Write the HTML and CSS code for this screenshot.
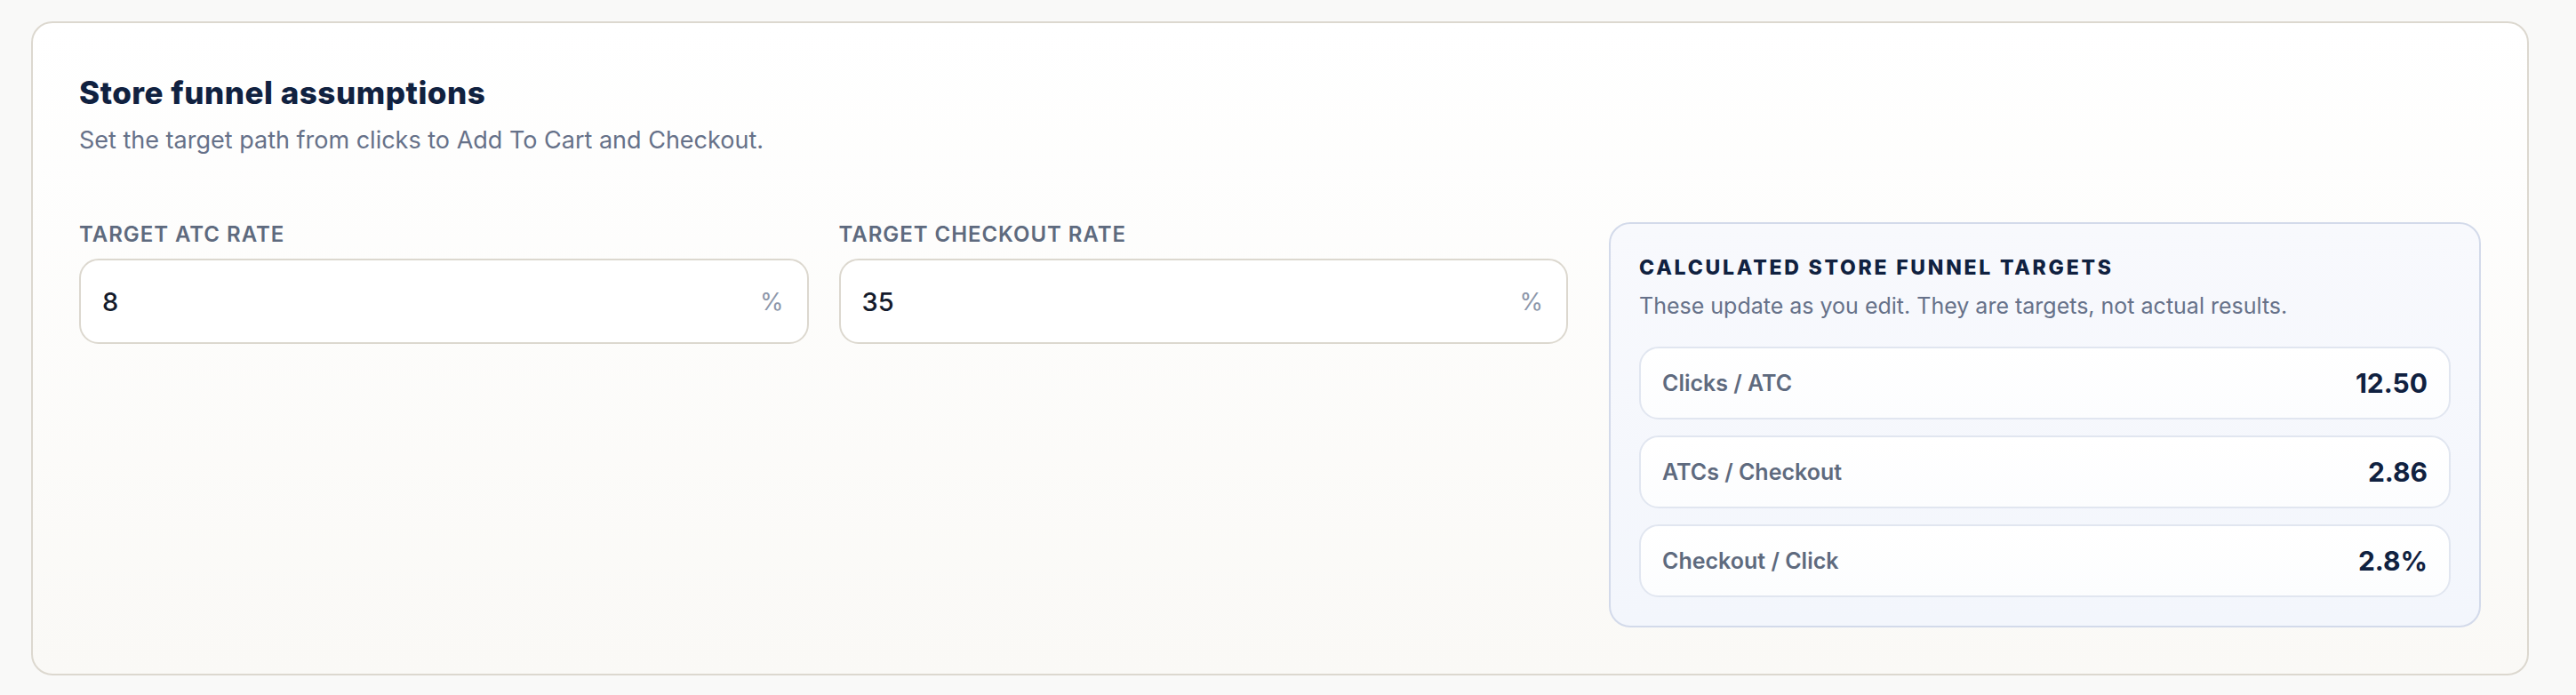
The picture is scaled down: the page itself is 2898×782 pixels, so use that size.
FILE: index.html
```html
<!DOCTYPE html>
<html lang="en">
<head>
<meta charset="utf-8">
<title>Store funnel assumptions</title>
<link rel="stylesheet" href="styles.css">
</head>
<body>
  <section class="card">
    <header class="card-head">
      <h2 class="card-title">Store funnel assumptions</h2>
      <p class="card-sub">Set the target path from clicks to Add To Cart and Checkout.</p>
    </header>

    <div class="layout">
      <div class="fields">
        <label class="field">
          <span class="field-label">Target ATC rate</span>
          <span class="field-box">
            <input class="field-input" type="text" value="8">
            <span class="field-unit">%</span>
          </span>
        </label>
        <label class="field">
          <span class="field-label">Target checkout rate</span>
          <span class="field-box">
            <input class="field-input" type="text" value="35">
            <span class="field-unit">%</span>
          </span>
        </label>
      </div>

      <aside class="targets">
        <h3 class="targets-title">Calculated store funnel targets</h3>
        <p class="targets-sub">These update as you edit. They are targets, not actual results.</p>
        <ul class="target-list">
          <li class="target-row"><span class="target-name">Clicks / ATC</span><span class="target-value">12.50</span></li>
          <li class="target-row"><span class="target-name">ATCs / Checkout</span><span class="target-value">2.86</span></li>
          <li class="target-row"><span class="target-name">Checkout / Click</span><span class="target-value">2.8%</span></li>
        </ul>
      </aside>
    </div>
  </section>
</body>
</html>
```

FILE: styles.css
```css
* {
  box-sizing: border-box;
}

html,
body {
  margin: 0;
}

body {
  background: #f9f9f8;
  font-family: Inter, "Noto Sans", "Liberation Sans", sans-serif;
  padding: 24px 53px 21px 35px;
  color: #0f1f3a;
}

.card {
  border: 2px solid #dcd8cf;
  border-radius: 24px;
  background: linear-gradient(180deg, #ffffff 0%, #faf9f6 100%);
  padding: 56px 52px 52px 52px;
}

.card-head {
  margin-bottom: 73px;
}

.card-title {
  margin: 0;
  font-size: 35px;
  line-height: 44px;
  font-weight: 800;
  letter-spacing: 0.015em;
  color: #102140;
}

.card-sub {
  margin: 13px 0 0;
  font-size: 27px;
  line-height: 38px;
  color: #667189;
}

.layout {
  display: grid;
  grid-template-columns: 1fr 981px;
  column-gap: 46px;
  align-items: start;
}

.fields {
  display: grid;
  grid-template-columns: 1fr 1fr;
  column-gap: 34px;
}

.field {
  display: flex;
  flex-direction: column;
  gap: 13px;
}

.field-label {
  font-size: 24px;
  line-height: 28px;
  font-weight: 600;
  letter-spacing: 0.04em;
  text-transform: uppercase;
  color: #5e6a7e;
}

.field-box {
  display: flex;
  align-items: center;
  height: 96px;
  border: 2px solid #dcd8cf;
  border-radius: 22px;
  background: #ffffff;
  padding: 0 26px 0 24px;
}

.field-input {
  flex: 1;
  min-width: 0;
  border: 0;
  outline: none;
  background: transparent;
  padding: 0;
  font-family: inherit;
  font-size: 29px;
  font-weight: 500;
  color: #131a2b;
}

.field-unit {
  font-size: 27px;
  color: #8d97aa;
}

.targets {
  border: 2px solid #d3daea;
  border-radius: 24px;
  background: linear-gradient(180deg, #f8f9fd 0%, #f3f6fc 100%);
  padding: 34px 32px 32px 32px;
}

.targets-title {
  margin: 0;
  font-size: 23px;
  line-height: 30px;
  font-weight: 800;
  letter-spacing: 0.12em;
  text-transform: uppercase;
  color: #102140;
}

.targets-sub {
  margin: 11px 0 0;
  font-size: 25px;
  line-height: 34px;
  color: #667189;
}

.target-list {
  list-style: none;
  margin: 29px 0 0;
  padding: 0;
  display: flex;
  flex-direction: column;
  gap: 18px;
}

.target-row {
  display: flex;
  align-items: center;
  justify-content: space-between;
  height: 82px;
  border: 2px solid #e1e6f0;
  border-radius: 22px;
  background: linear-gradient(180deg, #ffffff 0%, #fcfdfe 100%);
  padding: 0 24px;
}

.target-name {
  font-size: 25px;
  font-weight: 600;
  color: #5e6a7e;
}

.target-value {
  font-size: 30px;
  font-weight: 700;
  color: #102140;
}
```
